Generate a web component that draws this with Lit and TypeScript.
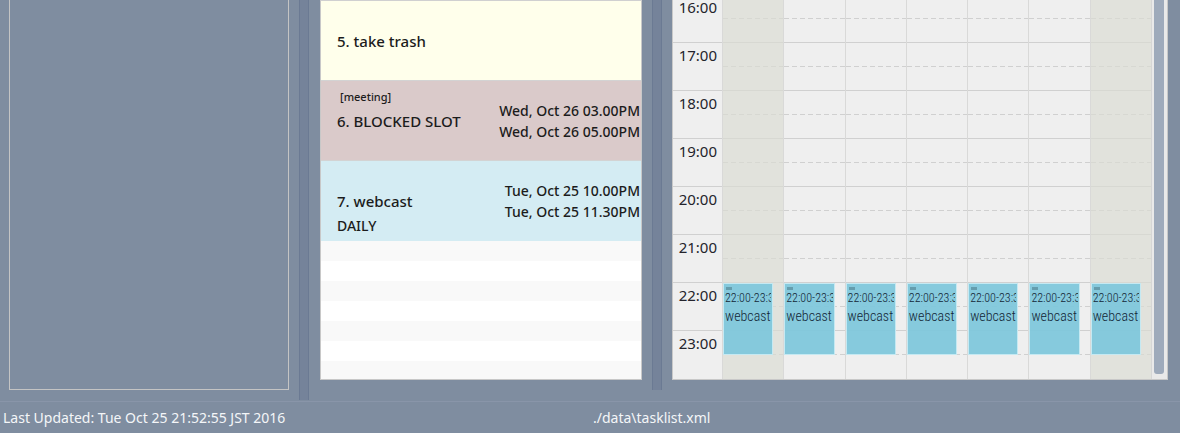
import { LitElement, html, css, nothing } from 'lit';
import { customElement, property } from 'lit/decorators.js';

interface Task {
  title: string;
  kind: 'plain' | 'blocked' | 'daily';
  tag?: string;
  start?: string;
  end?: string;
  repeat?: string;
}

const TASKS: Task[] = [
  { title: '5. take trash', kind: 'plain' },
  {
    title: '6. BLOCKED SLOT',
    kind: 'blocked',
    tag: '[meeting]',
    start: 'Wed, Oct 26 03.00PM',
    end: 'Wed, Oct 26 05.00PM',
  },
  {
    title: '7. webcast',
    kind: 'daily',
    start: 'Tue, Oct 25 10.00PM',
    end: 'Tue, Oct 25 11.30PM',
    repeat: 'DAILY',
  },
];

const HOURS = ['16:00', '17:00', '18:00', '19:00', '20:00', '21:00', '22:00', '23:00'];
const DAYS = [0, 1, 2, 3, 4, 5, 6];
const DATA_FILE = './data\\tasklist.xml';

@customElement('task-list')
export class TaskList extends LitElement {
  @property({ attribute: false }) tasks: Task[] = [];

  static styles = css`
    :host {
      display: block;
      box-sizing: border-box;
      overflow: hidden;
      border: 1px solid #c8c8c8;
      border-top-color: #d0d0d0;
      background: repeating-linear-gradient(#f9f9f9 0 20px, #ffffff 20px 40px);
      color: #1c1c1c;
      font: 500 15px/20px 'Noto Sans', 'Open Sans', sans-serif;
    }
    ol {
      list-style: none;
      margin: 0;
      padding: 0;
    }
    li {
      box-sizing: border-box;
      height: 80px;
      display: flex;
      justify-content: space-between;
      border-bottom: 1px solid #d3d3d3;
    }
    .plain {
      background: #ffffeb;
    }
    .blocked {
      background: #dacaca;
    }
    .daily {
      background: #d4ecf3;
      border-bottom-color: #d4ecf3;
    }
    .text {
      display: grid;
      grid-template-rows: 15px 20px 20px;
      row-gap: 5px;
      padding: 10px 0 0 16px;
      white-space: nowrap;
    }
    .tag {
      padding-left: 3px;
      font-size: 11px;
      line-height: 12px;
    }
    .repeat {
      font-size: 14px;
    }
    .dates {
      padding: 19px 1px 0 0;
      font-size: 14px;
      line-height: 21px;
      text-align: right;
      white-space: nowrap;
    }
    time {
      display: block;
    }
  `;

  render() {
    return html`<ol>
      ${this.tasks.map(
        (t) => html`<li class=${t.kind}>
          <div class="text">
            <span class="tag">${t.tag ?? nothing}</span>
            <span>${t.title}</span>
            <span class="repeat">${t.repeat ?? nothing}</span>
          </div>
          ${t.start
            ? html`<div class="dates"><time>${t.start}</time><time>${t.end}</time></div>`
            : nothing}
        </li>`,
      )}
    </ol>`;
  }
}

@customElement('week-calendar')
export class WeekCalendar extends LitElement {
  static styles = css`
    :host {
      display: grid;
      grid-template-columns: 49px minmax(0, 1fr) 15px;
      grid-template-rows: minmax(0, 1fr);
      box-sizing: border-box;
      overflow: hidden;
      border: 1px solid #c8c8c8;
      border-top: 0;
      background: #efefef;
    }
    .hours {
      display: flex;
      flex-direction: column;
      justify-content: flex-end;
      color: #24242c;
      font: 15px/20px 'Noto Sans', 'Open Sans', sans-serif;
      text-align: right;
    }
    .hour {
      flex: none;
      box-sizing: border-box;
      height: 48px;
      padding: 2px 5px 0 0;
      border-top: 1px solid #d0d0d0;
    }
    .hours,
    .day {
      padding-bottom: 1px;
    }
    .days {
      display: grid;
      grid-template-columns: repeat(7, minmax(0, 1fr));
      grid-template-rows: minmax(0, 1fr);
      border-right: 1px solid #d6d6d6;
    }
    .day {
      position: relative;
      display: flex;
      flex-direction: column;
      justify-content: flex-end;
      border-left: 1px solid #d9d9d8;
      --line: #d0d0d0;
    }
    .weekend {
      background: #e1e2dc;
      --line: #d7d8d2;
    }
    .slot {
      flex: none;
      box-sizing: border-box;
      height: 48px;
      border-top: 1px solid var(--line);
      background: repeating-linear-gradient(90deg, var(--line) 0 5px, transparent 5px 8px) 0 23px /
        100% 1px no-repeat;
    }
    .event {
      position: absolute;
      bottom: 24px;
      left: 0;
      right: 10px;
      height: 72px;
      box-sizing: border-box;
      overflow: hidden;
      padding: 3px 0 0 1px;
      border: 1px solid #c5e9f2;
      background: rgba(125, 199, 219, 0.92);
      color: #122636;
      font: 300 12px/16px 'Roboto Condensed', Roboto, sans-serif;
      white-space: nowrap;
    }
    .grip {
      width: 6px;
      height: 3px;
      margin-left: 1px;
      background: #659dad;
    }
    .when {
      display: block;
      margin-right: 1px;
      overflow: hidden;
    }
    .name {
      display: block;
      font-size: 14px;
      line-height: 20px;
    }
    .scroll {
      padding: 0 3px 5px 2px;
      display: flex;
      background: #e9e9e9;
    }
    .thumb {
      flex: 1;
      border-radius: 0 0 3px 3px;
      background: #9eaabb;
    }
  `;

  render() {
    return html`
      <div class="hours">${HOURS.map((h) => html`<div class="hour">${h}</div>`)}</div>
      <div class="days">
        ${DAYS.map(
          (d) => html`<div class="day ${d === 0 || d === 6 ? 'weekend' : ''}">
            ${HOURS.map(() => html`<div class="slot"></div>`)}
            <div class="event">
              <div class="grip"></div>
              <span class="when">22:00-23:30</span>
              <span class="name">webcast</span>
            </div>
          </div>`,
        )}
      </div>
      <div class="scroll"><div class="thumb"></div></div>
    `;
  }
}

@customElement('app-root')
export class AppRoot extends LitElement {
  static styles = css`
    :host {
      display: flex;
      flex-direction: column;
      height: 100vh;
      background: #7f8da0;
    }
    main {
      flex: 1;
      min-height: 0;
      display: grid;
      grid-template-columns: minmax(0, 299fr) 10px minmax(0, 871fr);
      grid-template-rows: minmax(0, 1fr);
      padding-bottom: 1px;
    }
    .side {
      display: grid;
      padding: 0 10px 10px 9px;
    }
    .frame {
      border: 1px solid #c4c4c4;
      border-top: 0;
    }
    .splitter {
      background: #75839a;
      border: solid #6b7a93;
      border-width: 0 1px;
    }
    .inner {
      min-height: 0;
      display: grid;
      grid-template-columns: minmax(0, 343fr) 10px minmax(0, 518fr);
      grid-template-rows: minmax(0, 1fr);
      padding-bottom: 10px;
    }
    .pane {
      display: grid;
      grid-template-rows: minmax(0, 1fr);
      min-height: 0;
      padding: 0 10px 10px 11px;
    }
    .calendar {
      padding: 0 12px 10px 10px;
    }
    footer {
      box-sizing: border-box;
      height: 32px;
      display: grid;
      grid-template-columns: 1fr 1fr;
      border-top: 1px solid #8995a9;
      color: #f4f6f8;
      font: 14px/32px 'Noto Sans', 'Open Sans', sans-serif;
      white-space: nowrap;
    }
    footer span {
      padding-left: 3px;
    }
  `;

  render() {
    return html`
      <main>
        <section class="side"><div class="frame"></div></section>
        <div class="splitter"></div>
        <div class="inner">
          <section class="pane"><task-list .tasks=${TASKS}></task-list></section>
          <div class="splitter"></div>
          <section class="pane calendar"><week-calendar></week-calendar></section>
        </div>
      </main>
      <footer>
        <span>Last Updated: Tue Oct 25 21:52:55 JST 2016</span>
        <span>${DATA_FILE}</span>
      </footer>
    `;
  }
}
